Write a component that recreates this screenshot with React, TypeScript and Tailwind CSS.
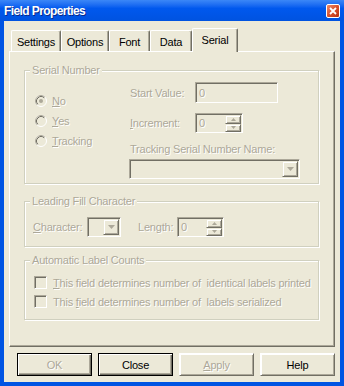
import type { ReactNode } from "react";

const dis = "text-[#aca899] [text-shadow:1px_1px_0_#fff]";
const sunken =
    "border border-t-[#aca899] border-l-[#aca899] border-r-white border-b-white shadow-[inset_1px_1px_0_#716f64]";
const raised =
    "border border-t-[#ece9d8] border-l-[#ece9d8] border-r-[#716f64] border-b-[#716f64] shadow-[inset_1px_1px_0_#fff,inset_-1px_-1px_0_#aca899]";

const tabs = [
    { name: "Settings", w: "w-[50px]" },
    { name: "Options", w: "w-[48px]" },
    { name: "Font", w: "w-[41px]" },
    { name: "Data", w: "w-[42px]" },
];

const Group = ({ title, className, children }: { title: string; className: string; children: ReactNode }) => (
    <div className={`relative border border-[#d0d0bf] shadow-[inset_1px_1px_0_#fff,1px_1px_0_#fff] ${className}`}>
        <span className={`absolute -top-[8px] left-[5px] px-[2px] bg-[#ece9d8] leading-[14px] ${dis}`}>{title}</span>
        {children}
    </div>
);

const Arrow = ({ up = false }: { up?: boolean }) => (
    <svg width="7" height="4" viewBox="0 0 7 4">
        <path d={up ? "M3.5 0 L7 4 L0 4 Z" : "M0 0 L7 0 L3.5 4 Z"} fill="#aca899" />
    </svg>
);

const Spin = ({ w }: { w: string }) => (
    <div className={`${sunken} ${w} h-[20px] flex items-center justify-between pl-[3px] pr-[1px] bg-[#ece9d8]`}>
        <span className={dis}>0</span>
        <div className="flex flex-col">
            <div className={`${raised} w-[16px] h-[9px] flex items-center justify-center`}>
                <svg width="5" height="3" viewBox="0 0 5 3"><path d="M2.5 0 L5 3 L0 3 Z" fill="#aca899" /></svg>
            </div>
            <div className={`${raised} w-[16px] h-[8px] flex items-center justify-center`}>
                <svg width="5" height="3" viewBox="0 0 5 3"><path d="M0 0 L5 0 L2.5 3 Z" fill="#aca899" /></svg>
            </div>
        </div>
    </div>
);

const Combo = ({ w }: { w: string }) => (
    <div className={`${sunken} ${w} h-[20px] flex items-center justify-end pr-[1px] bg-[#ece9d8]`}>
        <div className={`${raised} w-[16px] h-[16px] flex items-center justify-center`}>
            <Arrow />
        </div>
    </div>
);

const Radio = ({ checked = false }: { checked?: boolean }) => (
    <svg width="12" height="12" viewBox="0 0 12 12">
        <circle cx="6" cy="6" r="5.5" fill="#ece9d8" stroke="#fff" />
        <path d="M2.11 9.89 A5.5 5.5 0 0 1 9.89 2.11" fill="none" stroke="#aca899" />
        <path d="M2.82 9.18 A4.5 4.5 0 0 1 9.18 2.82" fill="none" stroke="#716f64" />
        {checked && <circle cx="6" cy="6" r="2" fill="#aca899" />}
    </svg>
);

const Btn = ({ children, def = false, disabled = false }: { children: ReactNode; def?: boolean; disabled?: boolean }) => (
    <div
        className={`w-[75px] h-[23px] flex items-center justify-center ${
            def
                ? "border border-black shadow-[inset_1px_1px_0_#fff,inset_-1px_-1px_0_#716f64,inset_-2px_-2px_0_#aca899]"
                : raised.replace("border-t-[#ece9d8] border-l-[#ece9d8]", "border-t-white border-l-white")
        } ${disabled ? dis : "text-black"}`}
    >
        {children}
    </div>
);

export default function App() {
    return (
        <div className="w-[344px] h-[386px] flex flex-col bg-[#0054e3] font-['Liberation_Sans',Arial,sans-serif] text-[11px] tracking-[-0.2px] leading-[14px] select-none">
            {/* ===== title bar ===== */}
            <div className="h-[21px] flex items-center justify-between pl-[4px] pr-[4px] bg-gradient-to-b from-[#3b87f7] via-[#0058ee] via-40% to-[#0053e0]">
                <span className="text-white font-bold text-[12px] tracking-[-0.6px] [text-shadow:1px_1px_0_#0a2a8a]">
                    Field Properties
                </span>
                <div className="w-[14px] h-[14px] mt-[1px] rounded-[2px] border border-white bg-gradient-to-br from-[#ec8a6a] via-[#d9512c] to-[#b8300f] flex items-center justify-center">
                    <svg width="8" height="8" viewBox="0 0 8 8">
                        <path d="M1 1 L7 7 M7 1 L1 7" stroke="#fff" strokeWidth="1.8" />
                    </svg>
                </div>
            </div>

            {/* ===== body ===== */}
            <div className="mx-[4px] h-[361px] bg-[#ece9d8] pt-[7px] pb-[6px] flex flex-col">
                {/* tabs */}
                <div className="h-[23px] ml-[7px] flex items-end">
                    {tabs.map((t) => (
                        <div
                            key={t.name}
                            className={`${t.w} h-[21px] pt-[2px] flex items-center justify-center rounded-t-[2px] border-t border-l border-r border-t-white border-l-white border-r-[#716f64] shadow-[inset_-1px_0_0_#aca899] text-black`}
                        >
                            {t.name}
                        </div>
                    ))}
                    <div className="relative z-10 w-[46px] h-[24px] -mb-[1px] pb-[2px] flex items-center justify-center rounded-t-[2px] border-t border-l border-r border-t-white border-l-white border-r-[#716f64] shadow-[inset_-1px_0_0_#aca899] bg-[#ece9d8] text-black">
                        Serial
                    </div>
                </div>

                {/* tab page */}
                <div className="ml-[5px] w-[326px] h-[296px] border border-t-white border-l-white border-r-[#716f64] border-b-[#716f64] shadow-[inset_-1px_-1px_0_#aca899] flex flex-col">
                    <Group title="Serial Number" className="ml-[14px] mt-[18px] w-[295px] h-[114px] flex">
                        <div className="w-[104px] pl-[10px] pt-[24px] flex flex-col gap-[8px]">
                            <div className="h-[12px] flex items-center gap-[5px]">
                                <Radio checked />
                                <span className={dis}><u>N</u>o</span>
                            </div>
                            <div className="h-[12px] flex items-center gap-[5px]">
                                <Radio />
                                <span className={dis}><u>Y</u>es</span>
                            </div>
                            <div className="h-[12px] flex items-center gap-[5px]">
                                <Radio />
                                <span className={dis}><u>T</u>racking</span>
                            </div>
                        </div>
                        <div className="flex flex-col">
                            <div className="mt-[11px] h-[21px] flex items-center">
                                <span className={`w-[66px] pl-[1px] ${dis}`}>Start Value:</span>
                                <div className={`${sunken} w-[83px] h-[21px] pl-[3px] flex items-center`}>
                                    <span className={dis}>0</span>
                                </div>
                            </div>
                            <div className="mt-[10px] h-[20px] flex items-center">
                                <span className={`w-[66px] pl-[1px] ${dis}`}><u>I</u>ncrement:</span>
                                <Spin w="w-[48px]" />
                            </div>
                            <div className={`mt-[9px] pl-[1px] ${dis}`}>Tracking Serial Number Name:</div>
                            <div className="mt-[3px]">
                                <Combo w="w-[171px]" />
                            </div>
                        </div>
                    </Group>

                    <Group title="Leading Fill Character" className="ml-[14px] mt-[17px] w-[295px] h-[46px]">
                        <div className="mt-[15px] pl-[8px] flex items-center">
                            <span className={`w-[54px] ${dis}`}><u>C</u>haracter:</span>
                            <Combo w="w-[34px]" />
                            <span className={`ml-[17px] w-[39px] ${dis}`}>Length:</span>
                            <Spin w="w-[47px]" />
                        </div>
                    </Group>

                    <Group title="Automatic Label Counts" className="ml-[14px] mt-[13px] w-[295px] h-[60px]">
                        <div className="mt-[15px] pl-[9px] flex flex-col gap-[6px]">
                            <div className="h-[13px] flex items-center gap-[6px]">
                                <div className={`${sunken} w-[13px] h-[13px]`} />
                                <span className={`whitespace-pre ${dis}`}><u>T</u>his field determines number of  identical labels printed</span>
                            </div>
                            <div className="h-[13px] flex items-center gap-[6px]">
                                <div className={`${sunken} w-[13px] h-[13px]`} />
                                <span className={`whitespace-pre ${dis}`}>This <u>f</u>ield determines number of  labels serialized</span>
                            </div>
                        </div>
                    </Group>
                </div>

                {/* buttons */}
                <div className="mt-[6px] pl-[13px] flex gap-[6px]">
                    <Btn def disabled>OK</Btn>
                    <Btn def>Close</Btn>
                    <Btn disabled><u>A</u>pply</Btn>
                    <Btn>Help</Btn>
                </div>
            </div>
        </div>
    );
}
